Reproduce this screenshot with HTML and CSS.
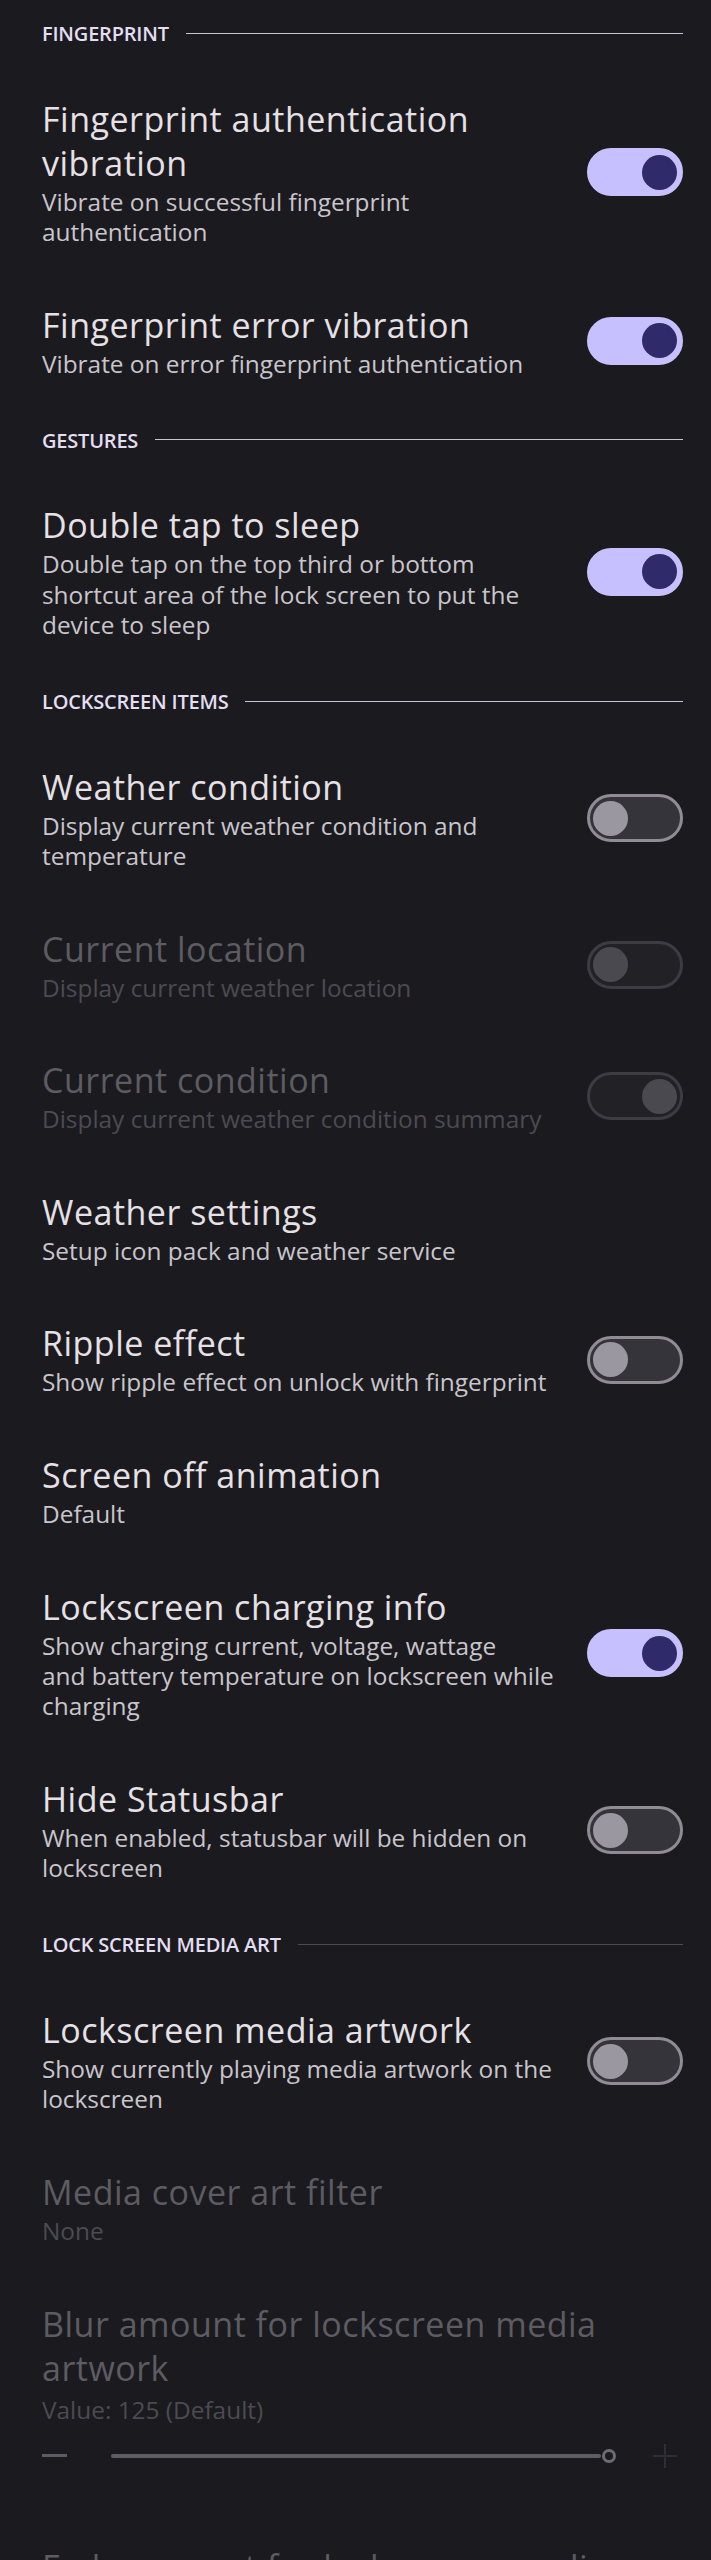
FILE: index.html
```html
<!DOCTYPE html>
<html lang="en">
<head>
<meta charset="utf-8">
<title>Lockscreen settings</title>
<link rel="stylesheet" href="styles.css">
</head>
<body>
<main class="prefs">

  <section class="group">
    <h2 class="group-title">FINGERPRINT</h2>
    <div class="pref">
      <div class="pref-text">
        <div class="pref-title">Fingerprint authentication vibration</div>
        <div class="pref-summary">Vibrate on successful fingerprint authentication</div>
      </div>
      <div class="switch on"><span class="thumb"></span></div>
    </div>
    <div class="pref">
      <div class="pref-text">
        <div class="pref-title">Fingerprint error vibration</div>
        <div class="pref-summary">Vibrate on error fingerprint authentication</div>
      </div>
      <div class="switch on"><span class="thumb"></span></div>
    </div>
  </section>

  <section class="group">
    <h2 class="group-title">GESTURES</h2>
    <div class="pref">
      <div class="pref-text">
        <div class="pref-title">Double tap to sleep</div>
        <div class="pref-summary">Double tap on the top third or bottom shortcut area of the lock screen to put the device to sleep</div>
      </div>
      <div class="switch on"><span class="thumb"></span></div>
    </div>
  </section>

  <section class="group">
    <h2 class="group-title">LOCKSCREEN ITEMS</h2>
    <div class="pref">
      <div class="pref-text">
        <div class="pref-title">Weather condition</div>
        <div class="pref-summary">Display current weather condition and temperature</div>
      </div>
      <div class="switch"><span class="thumb"></span></div>
    </div>
    <div class="pref disabled">
      <div class="pref-text">
        <div class="pref-title">Current location</div>
        <div class="pref-summary">Display current weather location</div>
      </div>
      <div class="switch"><span class="thumb"></span></div>
    </div>
    <div class="pref disabled">
      <div class="pref-text">
        <div class="pref-title">Current condition</div>
        <div class="pref-summary">Display current weather condition summary</div>
      </div>
      <div class="switch on"><span class="thumb"></span></div>
    </div>
    <div class="pref">
      <div class="pref-text">
        <div class="pref-title">Weather settings</div>
        <div class="pref-summary">Setup icon pack and weather service</div>
      </div>
    </div>
    <div class="pref">
      <div class="pref-text">
        <div class="pref-title">Ripple effect</div>
        <div class="pref-summary">Show ripple effect on unlock with fingerprint</div>
      </div>
      <div class="switch"><span class="thumb"></span></div>
    </div>
    <div class="pref">
      <div class="pref-text">
        <div class="pref-title">Screen off animation</div>
        <div class="pref-summary">Default</div>
      </div>
    </div>
    <div class="pref">
      <div class="pref-text">
        <div class="pref-title">Lockscreen charging info</div>
        <div class="pref-summary">Show charging current, voltage, wattage and&nbsp;battery temperature on lockscreen while charging</div>
      </div>
      <div class="switch on"><span class="thumb"></span></div>
    </div>
    <div class="pref">
      <div class="pref-text">
        <div class="pref-title">Hide Statusbar</div>
        <div class="pref-summary">When enabled, statusbar will be hidden on lockscreen</div>
      </div>
      <div class="switch"><span class="thumb"></span></div>
    </div>
  </section>

  <section class="group">
    <h2 class="group-title dim">LOCK SCREEN MEDIA ART</h2>
    <div class="pref">
      <div class="pref-text">
        <div class="pref-title">Lockscreen media artwork</div>
        <div class="pref-summary">Show currently playing media artwork on the lockscreen</div>
      </div>
      <div class="switch"><span class="thumb"></span></div>
    </div>
    <div class="pref disabled">
      <div class="pref-text">
        <div class="pref-title">Media cover art filter</div>
        <div class="pref-summary">None</div>
      </div>
    </div>
    <div class="pref disabled slider-pref">
      <div class="pref-text">
        <div class="pref-title">Blur amount for lockscreen media artwork</div>
        <div class="pref-summary value">Value: 125 (Default)</div>
        <div class="slider">
          <span class="slider-minus"></span>
          <span class="slider-track"><span class="slider-knob"></span></span>
          <span class="slider-plus"></span>
        </div>
      </div>
    </div>
    <div class="pref disabled slider-pref">
      <div class="pref-text">
        <div class="pref-title">Fade amount for lockscreen media artwork</div>
        <div class="pref-summary value">Value: 20 (Default)</div>
        <div class="slider">
          <span class="slider-minus"></span>
          <span class="slider-track"><span class="slider-knob"></span></span>
          <span class="slider-plus"></span>
        </div>
      </div>
    </div>
  </section>

</main>
</body>
</html>
```
FILE: styles.css
```css
html, body {
  margin: 0;
  padding: 0;
  background: #1b1a1f;
}

body {
  font-family: "Open Sans", "Liberation Sans", sans-serif;
  color: #e6e1e6;
}

.prefs {
  padding: 0 28px 40px 42px;
}

.group-title {
  display: flex;
  align-items: center;
  gap: 17px;
  margin: 22px 0 23px;
  font-size: 20px;
  line-height: 24px;
  font-weight: 600;
  color: #e4def3;
  letter-spacing: -0.2px;
}

.group-title::after {
  content: "";
  flex: 1;
  height: 1px;
  background: #c9c5d0;
  margin-top: -2px;
}

.group-title.dim::after {
  background: #4c4b52;
}

.pref {
  display: flex;
  align-items: center;
  gap: 30px;
  padding: 27.6px 0;
}

.pref-text {
  flex: 1;
  min-width: 0;
}

.pref-title {
  font-size: 34px;
  line-height: 44px;
  letter-spacing: 0.5px;
  color: #e6e1e6;
}

.pref-summary {
  margin-top: 2px;
  font-size: 24.4px;
  line-height: 30.4px;
  color: #c9c5cc;
}

.pref.disabled .pref-title {
  color: #5d5c62;
}

.pref.disabled .pref-summary {
  color: #4c4b51;
}

/* switch */
.switch {
  flex: none;
  width: 96px;
  height: 48px;
  box-sizing: border-box;
  border-radius: 24px;
  border: 3px solid #8f8c96;
  background: #36343b;
  display: flex;
  align-items: center;
  padding: 0 3px;
}

.switch .thumb {
  width: 35px;
  height: 35px;
  border-radius: 50%;
  background: #9a97a1;
}

.switch.on {
  border-color: #c6c0ff;
  background: #c6c0ff;
  justify-content: flex-end;
}

.switch.on .thumb {
  background: #2f2b6b;
}

.pref.disabled .switch {
  border-color: #3d3c42;
  background: #222126;
}

.pref.disabled .switch .thumb {
  background: #4a494f;
}

/* slider */
.slider-pref .value {
  margin-top: 5px;
}

.slider {
  display: flex;
  align-items: center;
  height: 28px;
  margin: 17px 0 20px;
}

.slider-minus {
  width: 25px;
  height: 3px;
  background: #5c5b61;
}

.slider-track {
  position: relative;
  margin-left: 44px;
  width: 490px;
  height: 4px;
  border-radius: 2px;
  background: #5e5d63;
}

.slider-knob {
  position: absolute;
  right: -15px;
  top: -5px;
  width: 8px;
  height: 8px;
  border: 3px solid #6d6c72;
  border-radius: 50%;
  background: #1b1a1f;
}

.slider-plus {
  position: relative;
  margin-left: 52px;
  width: 24px;
  height: 24px;
}

.slider-plus::before,
.slider-plus::after {
  content: "";
  position: absolute;
  background: #2f2e34;
}

.slider-plus::before {
  left: 0;
  right: 0;
  top: 11px;
  height: 2px;
}

.slider-plus::after {
  top: 0;
  bottom: 0;
  left: 11px;
  width: 2px;
}
```
